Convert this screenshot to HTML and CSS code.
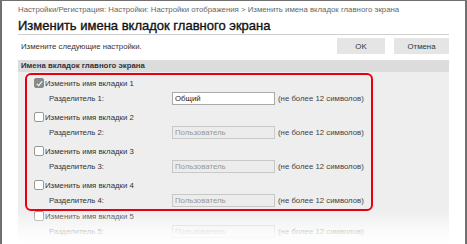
FILE: index.html
```html
<!DOCTYPE html>
<html lang="ru">
<head>
  <meta charset="UTF-8">
  <title>Изменить имена вкладок главного экрана</title>
  <link rel="stylesheet" href="styles.css">
</head>
<body>
  <div class="frame">
    <div class="crumbs">Настройки/Регистрация: Настройки: Настройки отображения &gt; Изменить имена вкладок главного экрана</div>
    <h1 class="title">Изменить имена вкладок главного экрана</h1>

    <div class="toolbar">
      <span class="hint-top">Измените следующие настройки.</span>
      <button class="btn btn-ok">OK</button>
      <button class="btn">Отмена</button>
    </div>

    <div class="panel">
      <div class="panel-head">Имена вкладок главного экрана</div>
      <div class="panel-body">
        <div class="marked">
          <div class="group">
            <label class="check"><span class="box on"></span>Изменить имя вкладки 1</label>
            <div class="field">
              <span class="field-label">Разделитель 1:</span>
              <span class="input active">Общий</span>
              <span class="limit">(не более 12 символов)</span>
            </div>
          </div>
          <div class="group">
            <label class="check"><span class="box"></span>Изменить имя вкладки 2</label>
            <div class="field">
              <span class="field-label">Разделитель 2:</span>
              <span class="input">Пользователь</span>
              <span class="limit">(не более 12 символов)</span>
            </div>
          </div>
          <div class="group">
            <label class="check"><span class="box"></span>Изменить имя вкладки 3</label>
            <div class="field">
              <span class="field-label">Разделитель 3:</span>
              <span class="input">Пользователь</span>
              <span class="limit">(не более 12 символов)</span>
            </div>
          </div>
          <div class="group">
            <label class="check"><span class="box"></span>Изменить имя вкладки 4</label>
            <div class="field">
              <span class="field-label">Разделитель 4:</span>
              <span class="input">Пользователь</span>
              <span class="limit">(не более 12 символов)</span>
            </div>
          </div>
        </div>
        <div class="group rest">
          <label class="check"><span class="box"></span>Изменить имя вкладки 5</label>
          <div class="field">
            <span class="field-label">Разделитель 5:</span>
            <span class="input">Пользователь</span>
            <span class="limit">(не более 12 символов)</span>
          </div>
        </div>
      </div>
    </div>

    <!-- white fade over the bottom of the screenshot -->
    <div class="fade"></div>
  </div>
</body>
</html>
```

FILE: styles.css
```css
body {
  margin: 0;
  font-family: "Liberation Sans", Arial, sans-serif;
  color: #222;
  background: #fff;
}

.frame {
  position: relative;
  width: 467px;
  height: 244px;
  border-top: 1px solid #707070;
  border-left: 2px solid #707070;
  border-right: 2px solid #707070;
  padding: 0 16px;
  box-sizing: border-box;
  overflow: hidden;
}

.crumbs {
  font-size: 7.8px;
  color: #666;
  padding-top: 4px;
  line-height: 10px;
  height: 10px;
  white-space: nowrap;
}

.title {
  margin: 0;
  font-size: 13px;
  font-weight: normal;
  -webkit-text-stroke: 0.35px #111;
  color: #111;
  line-height: 14px;
  padding-top: 4px;
  padding-bottom: 1px;
  border-bottom: 1px solid #cfcfcf;
  white-space: nowrap;
}

.toolbar {
  display: flex;
  align-items: center;
  margin-top: 3px;
  height: 16px;
}

.hint-top {
  font-size: 7.8px;
  color: #333;
  padding-left: 3px;
  flex: 1;
}

.btn {
  font-family: inherit;
  font-size: 7.8px;
  color: #333;
  background: #e5e5e5;
  border: none;
  height: 16px;
  width: 55px;
  padding: 0;
  margin-left: 9px;
}

.btn-ok {
  width: 48px;
}

.panel {
  margin-top: 6px;
}

.panel-head {
  background: #dcdcdc;
  font-size: 7.8px;
  font-weight: bold;
  color: #333;
  padding: 0 3px;
  height: 12px;
  line-height: 12px;
}

.panel-body {
  background: #eeeeee;
  padding-top: 1px;
  height: 200px;
}

.marked {
  margin-left: 7px;
  width: 348px;
  border: 2px solid #e60012;
  border-radius: 6px;
  box-sizing: border-box;
  padding-bottom: 1px;
}

.group {
  padding-left: 7px;
  margin-bottom: 3px;
}

.marked .group:last-child {
  margin-bottom: 0;
}

.rest {
  padding-left: 16px;
  margin-top: -3px;
}

.check {
  display: flex;
  align-items: center;
  height: 16px;
  font-size: 7.8px;
  color: #333;
  white-space: nowrap;
}

.box {
  width: 8px;
  height: 8px;
  border: 1px solid #999;
  border-radius: 2px;
  background: #fff;
  margin-right: 1px;
  position: relative;
}

.box.on {
  background: #8a8a8a;
  border-color: #8a8a8a;
}

.box.on::after {
  content: "";
  position: absolute;
  left: 2.5px;
  top: 0.5px;
  width: 2px;
  height: 5px;
  border-right: 1.5px solid #fff;
  border-bottom: 1.5px solid #fff;
  transform: rotate(40deg);
}

.field {
  display: flex;
  align-items: center;
  height: 15px;
  font-size: 7.8px;
  white-space: nowrap;
}

.field-label {
  width: 138px;
  box-sizing: border-box;
  padding-left: 15px;
  color: #333;
}

.input {
  width: 103px;
  height: 13px;
  box-sizing: border-box;
  line-height: 11px;
  border: 1px solid #c8c8c8;
  background: #ececec;
  color: #999;
  padding-left: 2px;
}

.input.active {
  background: #fff;
  color: #222;
  border-color: #aaa;
}

.limit {
  margin-left: 3px;
  color: #444;
}

.fade {
  position: absolute;
  left: -2px;
  right: -2px;
  top: 210px;
  height: 34px;
  background: linear-gradient(to bottom, rgba(255,255,255,0) 0%, rgba(255,255,255,0.35) 25%, rgba(255,255,255,0.8) 65%, #fff 100%);
}
```
